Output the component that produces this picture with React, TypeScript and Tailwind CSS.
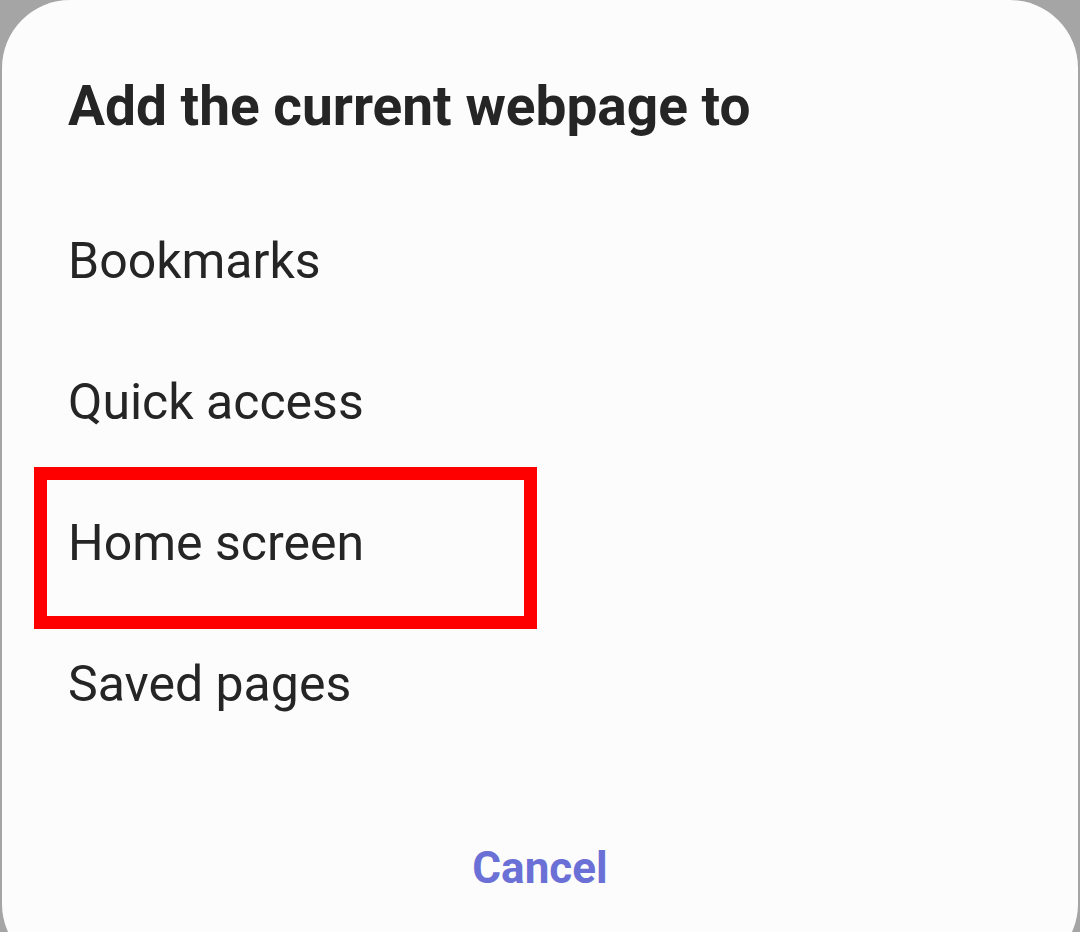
import React from "react";

export default function App() {
  const items = ["Bookmarks", "Quick access", "Home screen", "Saved pages"];
  return (
    <div
      className="w-[1080px] h-[932px] overflow-hidden bg-[#a5a5a5]"
      style={{ fontFamily: "Roboto, 'Noto Sans', sans-serif" }}
    >
      <div className="ml-[2px] w-[1076px] h-[972px] rounded-[68px] bg-[#fcfcfc] flex flex-col">
        <div className="shrink-0 h-[190px] pt-[22px] pl-[66px] flex items-center text-[55px] font-bold text-[#252525] leading-none">
          Add the current webpage to
        </div>
        {items.map((t) => (
          <div
            key={t}
            className="shrink-0 relative h-[141px] pl-[66px] flex items-center text-[50px] text-[#252525] leading-none"
          >
            {t}
            {t === "Home screen" && (
              <div className="absolute left-[32px] top-[-5px] w-[503px] h-[162px] border-[13px] border-[#ff0000]" />
            )}
          </div>
        ))}
        <div className="shrink-0 h-[228px] flex items-center justify-center text-[44px] font-bold text-[#6a70d5] leading-none">
          Cancel
        </div>
      </div>
    </div>
  );
}
